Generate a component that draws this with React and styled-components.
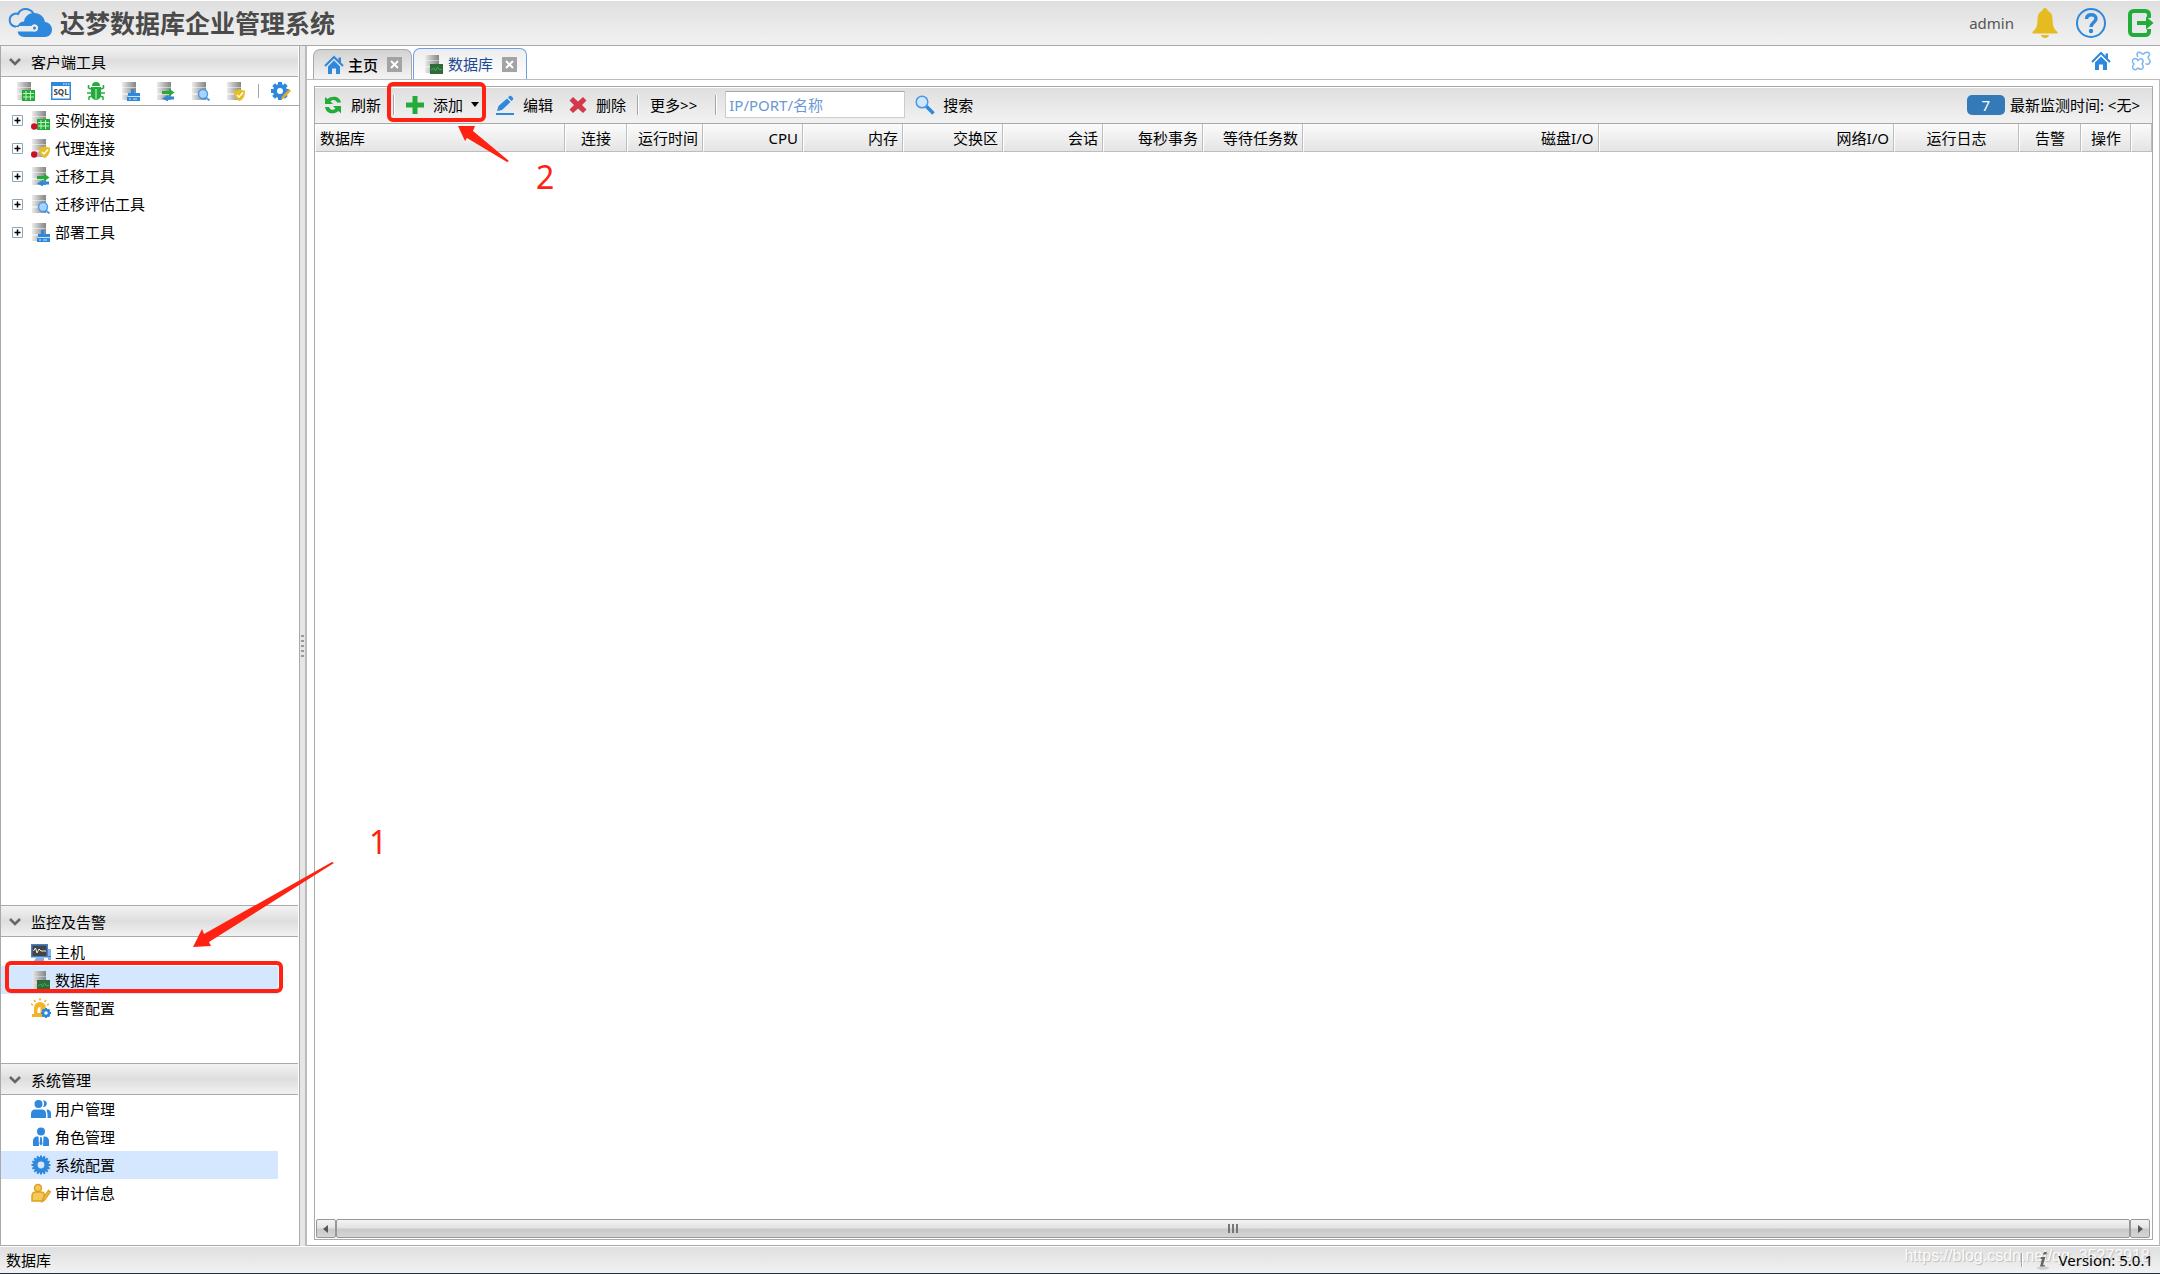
import React from "react";
import styled, { createGlobalStyle, css } from "styled-components";

const Global = createGlobalStyle`
  *, *::before, *::after { box-sizing: border-box; }
  body {
    margin: 0;
    background: #fff;
    color: #000;
    font: 15px/20px "Noto Sans", "Noto Sans CJK SC", sans-serif;
  }
  button, input { font: inherit; color: inherit; }
  button { padding: 0; border: 0; background: none; cursor: pointer; }
  svg { display: block; flex: none; }
`;

const RED = "#ff2212";
const BLUE = "#2e88dc";
const GREEN = "#22ad3a";
const LINE = "#a9a9a9";
const barFill = "linear-gradient(#dfdfdf, #f2f2f2)";

/* ---------- icons ---------- */

const Svg = ({ size = 20, box = 20, children }) => (
  <svg width={size} height={size} viewBox={`0 0 ${box} ${box}`} fill="none" aria-hidden="true">
    {children}
  </svg>
);

const LogoIcon = () => (
  <svg width="46" height="30" viewBox="0 0 46 30" fill="none" aria-hidden="true">
    <path d="M12 18.500H8a6.500 6.500 0 0 1-1-12.500C9 5 10 5.500 11 6 13 2 16 1 18.500 1c3.500 0 6 1.500 8 4.500" stroke={BLUE} strokeWidth="2" />
    <path d="M17 29a7 7 0 0 1-6.500-5.500H27a3.500 3.500 0 1 0-2.500-5.500H11c.5-3 3-4.500 6-4.500C18 8 22 5 27 5c6 0 10 3.500 11 9 4 .5 7 3.500 7 7.500 0 4.500-3 7.500-7.500 7.500z" fill={BLUE} />
    <path d="M9 20h17" stroke="#e9e9e9" strokeWidth="2" />
    <circle cx="27.500" cy="20" r="2.500" fill={BLUE} stroke="#e9e9e9" strokeWidth="2" />
  </svg>
);

const BADGES = {
  table: (
    <g>
      <path d="M6 9h13v11H6z" fill={GREEN} />
      <path d="M7 12.500h11M7 16h11M10 10v9M14.500 10v9" stroke="#c9f2c4" />
    </g>
  ),
  deploy: (
    <g fill={BLUE}>
      <path d="M10 8h3v4h-3z" />
      <path d="M7 12h12v3H7zM6 16h13v4H6z" />
      <path d="M7 15.500h12M8 18h2M12 18h4" stroke="#cfe5fa" />
    </g>
  ),
  transfer: (
    <g>
      <path d="M6 10h7V7.500l5.500 4-5.500 4V13H6z" fill={GREEN} />
      <path d="M18 15.500h-6v-1.500L6 17.500l6 3v-2h6z" fill={BLUE} />
    </g>
  ),
  search: (
    <g>
      <circle cx="12" cy="13" r="4.500" fill="#a9d4ff" stroke="#4d9bea" strokeWidth="1.500" />
      <path d="m15 16.500 3.500 3" stroke="#4d9bea" strokeWidth="2" />
    </g>
  ),
  shield: (
    <g>
      <path d="M13.500 8c2 1.500 3.500 1.500 5.500 1.500 0 5-1 8.500-5.500 10.500-4.500-2-5.500-5.500-5.500-10.500 2 0 3.500 0 5.500-1.500z" fill="#e6bd22" />
      <path d="m11 14 2 2 4-4.500" stroke="#fff" strokeWidth="1.500" />
    </g>
  ),
  chart: (
    <g>
      <path d="M6 10h13v10H6z" fill="#2f6b3a" />
      <path d="m7 16 3-2 1.500 3 2-4 1.500 2.500h3" stroke="#3fae52" />
    </g>
  ),
};

const ServerIcon = ({ badge, alert, size = 20 }) => (
  <Svg size={size}>
    <defs>
      <linearGradient id="slab" x1="0" x2="1">
        <stop offset="0" stopColor="#ececec" />
        <stop offset=".5" stopColor="#b5b5b5" />
        <stop offset="1" stopColor="#858585" />
      </linearGradient>
    </defs>
    <path d="M1 1h14v5.500H1z" fill="url(#slab)" />
    <path d="M1 7h14v5.500H1z" fill="url(#slab)" />
    <path d="M1 13.500h14V19H1z" fill="url(#slab)" />
    {BADGES[badge]}
    {alert && <circle cx="3.200" cy="16.500" r="3.200" fill="#cc1126" />}
  </Svg>
);

const SqlIcon = () => (
  <Svg>
    <path d="M.75 1.750h18.500v16.500H.75z" fill="#fff" stroke={BLUE} strokeWidth="1.500" />
    <path d="M1 1h18v4H1z" fill={BLUE} />
    <path d="M12 3h1.500M14.500 3H16M17 3h1.500" stroke="#fff" />
    <text x="10" y="14" textAnchor="middle" fontSize="8" fontWeight="700" fontFamily="Noto Sans, sans-serif" fill="#444">SQL</text>
  </Svg>
);

const BugIcon = () => (
  <Svg>
    <path d="M6 5a4 4 0 0 1 8 0z" fill={GREEN} />
    <path d="M5 6h10v8a5 5 0 0 1-10 0z" fill={GREEN} />
    <path d="M5.500 8 2.500 7V4M14.500 8l3-1V4M5.500 12H1M14.500 12H19M6 15l-3 1v3M14 15l3 1v3" stroke={GREEN} strokeWidth="1.500" />
    <path d="M10 8v10" stroke="#d9f2dd" />
  </Svg>
);

const teeth = (n, cx, cy, r, w, len) =>
  Array.from({ length: n }, (_, i) => (
    <rect key={i} x={cx - w / 2} y={cy - r - len} width={w} height={len + 2} transform={`rotate(${(360 / n) * i} ${cx} ${cy})`} />
  ));

const GearIcon = () => (
  <Svg>
    <g fill={BLUE}>
      {teeth(16, 10, 10, 7.5, 2, 2)}
    </g>
    <circle cx="10" cy="10" r="5.700" stroke={BLUE} strokeWidth="4.600" />
  </Svg>
);

const GearEditIcon = () => (
  <Svg>
    <g fill={BLUE}>{teeth(8, 9, 10, 6.5, 4, 2.5)}</g>
    <circle cx="9" cy="10" r="5" stroke={BLUE} strokeWidth="4" />
    <path d="m10 19 1-3.500L18 8l2 2-7.500 7.500z" fill="#e2a92c" />
  </Svg>
);

const MonitorIcon = () => (
  <Svg>
    <path d="M.75 2.750h15.500v12H.75z" fill="#444" stroke="#4a7fc4" strokeWidth="1.500" />
    <path d="m2.500 9 2-3 1.500 5 2-4 2 2h5" stroke="#eee" />
    <path d="M17 7h3v11h-3zM5 16h8v3H3z" fill="#7fb2ea" />
    <path d="M17.500 14.500h2" stroke="#2c62a8" />
  </Svg>
);

const AlarmIcon = () => (
  <Svg>
    <path d="M3 16V10a6 6 0 0 1 12 0v6zM1 16h12v3H1z" fill="#f5b32a" />
    <path d="M6.500 15v-4a3 3 0 0 1 3-2v6z" fill="#fff" />
    <path d="M9 0v2.500M3 2l1.500 2M15 2l-1.500 2M0 6l2 1M18 6l-2 1" stroke="#f5b32a" strokeWidth="1.500" />
    <g fill={BLUE}>{teeth(8, 15, 15, 3, 2, 2)}</g>
    <circle cx="15" cy="15" r="3" fill="#fff" stroke={BLUE} strokeWidth="2.500" />
  </Svg>
);

const UsersIcon = () => (
  <Svg>
    <g fill={BLUE}>
      <circle cx="7.500" cy="5" r="4" />
      <path d="M0 19v-4c0-3 1.500-4.500 4-4.500h7c2.500 0 4 1.500 4 4.500v4z" />
      <path d="M12 1.500c5-1 5 7 0 6.500 1.500-2 1.500-4.500 0-6.500zM15.500 10.500c3 0 4.500 1.500 4.500 4V19h-3.500v-4z" />
    </g>
  </Svg>
);

const RoleIcon = () => (
  <Svg>
    <g fill={BLUE}>
      <circle cx="10" cy="4.500" r="4" />
      <path d="M2 19v-5c0-3 2-4.500 4-4.500h1.500L8 19zM18 19v-5c0-3-2-4.500-4-4.500h-1.500L12 19z" />
      <path d="M9.300 10h1.400l.8 7-1.500 1.500L8.500 17z" />
    </g>
  </Svg>
);

const AuditIcon = () => (
  <Svg>
    <g fill="#f3c957" stroke="#dfa024" strokeWidth="1.500">
      <circle cx="7" cy="5" r="3.500" />
      <path d="M1 18v-5c0-2.500 1.500-4 4-4h5c2 0 3 1 3.500 2.500L12 18z" />
      <path d="m11 18.500 1-3 5.500-8 1.800 1.300-5.500 8z" />
    </g>
  </Svg>
);

const HomeIcon = ({ size = 20 }) => (
  <Svg size={size}>
    <path d="M1 11 10 2l9 9" stroke={BLUE} strokeWidth="2" />
    <path d="M14.500 2.500h2.500V8l-2.500-2.500z" fill={BLUE} />
    <path d="M4 11.500 10 5.500l6 6V19h-4v-5.500H8V19H4z" fill={BLUE} />
  </Svg>
);

const PuzzleIcon = () => (
  <Svg>
    <g stroke="#7fb6ee" strokeWidth="1.500">
      <path d="M2.500 8c2-1 3.500 0 4.500 1.500C8 8 10 7 11.500 8.500s.5 3-.5 4.500c1 1 2 3 .5 4.500s-3.500.5-4.500-.5c-1 1-3 2.500-4.500 1s-1-3.500.5-5C1.500 12 .5 9.500 2.500 8z" />
      <path d="M7 6C5 3 6.500.8 9 1.500c1.500.5 2 1.500 3.500 1.500C14 .8 18 .5 18.500 3c.3 2-1.500 2.500-1.500 3.500s2.500 2 2 4.500-3 3-4.500 1.500" />
    </g>
  </Svg>
);

const BellIcon = () => (
  <Svg size={30} box={30}>
    <path d="M15 0c1.500 0 2.500 1 2.500 2.500C21 4 22.500 7 22.500 11c0 7 1.500 10 5 13v1.500h-25V24c3.500-3 5-6 5-13 0-4 1.500-7 5-8.500C12.500 1 13.500 0 15 0zM11 27h8c-.5 4-7.500 4-8 0z" fill="#e5bb20" />
  </Svg>
);

const HelpIcon = () => (
  <Svg size={30} box={30}>
    <circle cx="15" cy="15" r="14" stroke={BLUE} strokeWidth="2" />
    <path d="M10.500 11c0-6 9.500-5.500 9.500-.5 0 4-5 4-5 8.500" stroke={BLUE} strokeWidth="3.500" />
    <circle cx="15" cy="23" r="2.200" fill={BLUE} />
  </Svg>
);

const ExitIcon = () => (
  <Svg size={30} box={30}>
    <path d="M24 10V6.500a3.500 3.500 0 0 0-3.500-3.500h-12A3.500 3.500 0 0 0 5 6.500v17A3.500 3.500 0 0 0 8.500 27h12a3.500 3.500 0 0 0 3.500-3.500V21" stroke={GREEN} strokeWidth="4" />
    <path d="M12 13h9V8.500l7.500 6.500-7.500 6.500V17h-9z" fill={GREEN} />
  </Svg>
);

const RefreshIcon = () => (
  <Svg>
    <path d="M2 9V2l2.500 2C9 0 17 1 18 7.500h-4C12.500 4.500 9.500 4.500 7.500 6.500L10 9z" fill={GREEN} />
    <path d="M18 11v7.500L15.500 16C11 20 3 19 2 12h4c1.500 3.500 4.500 3.500 6.500 1.500L10 11z" fill={GREEN} />
  </Svg>
);

const PlusIcon = () => (
  <Svg><path d="M7.500 1h5v6.500H19v5h-6.500V19h-5v-6.500H1v-5h6.500z" fill={GREEN} /></Svg>
);

const EditIcon = () => (
  <Svg>
    <path d="m2 16 1.500-5L12 3.500l3.500 3.500L7 15z" fill={BLUE} />
    <path d="m13 2.500 1.500-1.500c1-1 4.500 2 3.500 3.500L16.500 6z" fill={BLUE} />
    <path d="M1 19h18" stroke={BLUE} strokeWidth="2" />
  </Svg>
);

const DeleteIcon = () => (
  <Svg><path d="M5 2 10 6.500 15 2l3.500 3.500L14 10l4.500 4.500L15 18l-5-4.500L5 18l-3.500-3.500L6 10 1.500 5.500z" fill="#d23a4b" /></Svg>
);

const SearchIcon = () => (
  <Svg>
    <circle cx="7" cy="7" r="5.800" fill="#cfe6ff" stroke="#4d98e6" strokeWidth="1.500" />
    <path d="m11.500 11.500 7 7" stroke={BLUE} strokeWidth="3.500" />
  </Svg>
);

const InfoIcon = () => (
  <Svg>
    <ellipse cx="10" cy="18" rx="6" ry="1.800" fill="#cfcfcf" />
    <path d="M11 2h3l-1 2.500h-3zM8 7h4.500l-2.500 8h2l-.5 1.500H7L9 9H7.500z" fill="#666" />
  </Svg>
);

const ChevronIcon = () => (
  <Svg size={14} box={14}><path d="m2 4 5 5 5-5" stroke="#666" strokeWidth="2.500" /></Svg>
);

const CloseIcon = () => (
  <Svg size={15} box={15}>
    <path d="M0 0h15v15H0z" fill="#a3a3a3" />
    <path d="m4 4 7 7M11 4l-7 7" stroke="#fff" strokeWidth="2" />
  </Svg>
);

const ExpandIcon = () => (
  <Svg size={11} box={11}>
    <path d="M.5.5h10v10H.5z" fill="#fff" stroke="#8ba6bb" />
    <path d="M2.500 5.500h6M5.500 2.500v6" stroke="#000" strokeWidth="1.500" />
  </Svg>
);

/* ---------- frame ---------- */

const Page = styled.div`
  display: flex;
  flex-direction: column;
  height: 100vh;
  min-height: 600px;
`;

const TopBar = styled.header`
  display: flex;
  align-items: center;
  justify-content: space-between;
  height: 46px;
  padding: 0 5px 0 7px;
  border-top: 1px solid #fff;
  border-bottom: 1px solid ${LINE};
  background: ${barFill};
`;

const Brand = styled.div`
  display: flex;
  align-items: center;
  gap: 7px;
`;

const Title = styled.h1`
  margin: 0;
  font-size: 25px;
  line-height: 32px;
  color: #4a4a4a;
`;

const Account = styled.div`
  display: flex;
  align-items: center;
  gap: 16px;
  color: #555;
`;

const IconButton = styled.button`
  display: flex;
  ${({ $wide }) => $wide && css`padding-left: 3px;`}
`;

const Body = styled.div`
  flex: 1;
  display: flex;
  min-height: 0;
`;

/* ---------- side bar ---------- */

const Side = styled.aside`
  flex: none;
  display: flex;
  flex-direction: column;
  width: 300px;
  border: 1px solid ${LINE};
  border-top: 0;
  background: #fff;
`;

const Section = styled.section`
  display: flex;
  flex-direction: column;
  ${({ $height }) => ($height ? css`flex: none; height: ${$height}px;` : css`flex: 1; min-height: 0;`)}
`;

const SectionHead = styled.button`
  flex: none;
  display: flex;
  align-items: center;
  gap: 9px;
  height: ${({ $first }) => ($first ? 31 : 32)}px;
  margin-right: 1px;
  padding: 1px 0 0 7px;
  border-top: ${({ $first }) => ($first ? 0 : 1)}px solid ${LINE};
  border-bottom: 1px solid ${LINE};
  background: linear-gradient(#f3f3f3, #dedede 50%, #f1f1f1);
`;

const ToolStrip = styled.div`
  flex: none;
  display: flex;
  align-items: center;
  gap: 15px;
  height: 29px;
  padding-left: 15px;
  border-bottom: 1px solid ${LINE};
`;

const Tree = styled.ul`
  margin: ${({ $gap }) => $gap || 0}px 0 0;
  padding: 0;
  list-style: none;
`;

const TreeItem = styled.li`
  position: relative;
`;

const TreeRow = styled.button`
  display: flex;
  align-items: center;
  gap: 4px;
  width: calc(100% - 21px);
  height: 28px;
  padding-left: ${({ $branch }) => ($branch ? 11 : 30)}px;
  background: ${({ $selected }) => ($selected ? "#d5e6ff" : "transparent")};
  svg + svg { margin-left: 4px; }
`;

const Splitter = styled.div`
  flex: none;
  display: flex;
  flex-direction: column;
  align-items: center;
  justify-content: center;
  gap: 3px;
  width: 7px;
  border-right: 2px solid #bbb;
  background: #e6e6e6;
  cursor: col-resize;
`;

const Dot = styled.i`
  width: 3px;
  height: 2px;
  background: #999;
`;

/* ---------- main area ---------- */

const Main = styled.main`
  flex: 1;
  display: flex;
  flex-direction: column;
  min-width: 0;
`;

const TabBar = styled.div`
  flex: none;
  display: flex;
  align-items: flex-end;
  gap: 1px;
  height: 34px;
  padding-left: 6px;
  border-bottom: 1px solid #bbb;
`;

const Tab = styled.div`
  display: flex;
  align-items: center;
  gap: 9px;
  height: ${({ $active }) => ($active ? 31 : 30)}px;
  padding: 0 9px 0 10px;
  border: 1px solid ${({ $active }) => ($active ? "#6c9eea" : LINE)};
  border-bottom: 0;
  border-radius: 7px 7px 0 0;
  background: ${({ $active }) => ($active ? "linear-gradient(#ededed, #fff)" : "linear-gradient(#d2d2d2, #f4f4f4)")};
  color: ${({ $active }) => ($active ? "#1d4a93" : "#000")};
  font-weight: ${({ $active }) => ($active ? 400 : 500)};
`;

const TabLabel = styled.button`
  display: flex;
  align-items: center;
  gap: 4px;
  font-weight: inherit;
`;

const TabTools = styled.div`
  display: flex;
  align-self: center;
  gap: 20px;
  margin-left: auto;
  padding: 0 9px 4px 0;
`;

const Content = styled.div`
  flex: 1;
  display: flex;
  min-height: 0;
  padding: 6px 6px 5px 7px;
  border-right: 1px solid #bbb;
  border-bottom: 1px solid ${LINE};
`;

const Panel = styled.div`
  flex: 1;
  display: flex;
  flex-direction: column;
  min-width: 0;
  border: 1px solid ${LINE};
`;

const Toolbar = styled.div`
  flex: none;
  display: flex;
  align-items: center;
  height: 37px;
  padding: 0 8px 2px;
  border-top: 1px solid #fff;
  border-bottom: 1px solid ${LINE};
  background: ${barFill};
`;

const ToolButton = styled.button`
  position: relative;
  display: flex;
  align-items: center;
  gap: 8px;
  margin-right: ${({ $after }) => $after || 0}px;
`;

const Divider = styled.span`
  flex: none;
  width: 2px;
  height: ${({ $short }) => ($short ? 14 : 20)}px;
  margin: 0 ${({ $after }) => $after || 0}px 0 ${({ $before }) => $before || 0}px;
  border-left: 1px solid #a5a5a5;
  background: #fff;
`;

const Caret = styled.i`
  border: 4px solid transparent;
  border-top: 5px solid #000;
  border-bottom: 0;
`;

const SearchBox = styled.input`
  width: 180px;
  height: 27px;
  margin-right: 10px;
  padding: 0 3px;
  border: 1px solid #ccc;
  border-top-color: ${LINE};
  border-radius: 0;
  background: #fff;
  &::placeholder { color: #6b98d2; opacity: 1; }
`;

const Latest = styled.div`
  display: flex;
  align-items: center;
  gap: 5px;
  margin-left: auto;
  padding-right: 4px;
`;

const Count = styled.span`
  width: 38px;
  border-radius: 5px;
  background: #347ab8;
  color: #fff;
  text-align: center;
`;

const Grid = styled.table`
  flex: none;
  width: 100%;
  table-layout: fixed;
  border-collapse: separate;
  border-spacing: 0;
`;

const HeadCell = styled.th`
  width: ${({ $width }) => ($width ? `${$width}px` : "auto")};
  height: 28px;
  padding: 0 4px;
  border-right: 1px solid #bdbdbd;
  border-bottom: 1px solid #bdbdbd;
  border-left: 1px solid #fff;
  background: linear-gradient(#fbfbfb, #e4e4e4);
  font-weight: 400;
  text-align: ${({ $align }) => $align};
  white-space: nowrap;
`;

const Empty = styled.div`
  flex: 1;
`;

const ScrollTrack = styled.div`
  flex: none;
  display: flex;
  height: 19px;
  margin: 0 2px 1px 1px;
`;

const metal = css`
  display: flex;
  align-items: center;
  justify-content: center;
  border: 1px solid #979797;
  border-radius: 2px;
  background: linear-gradient(#f3f3f3, #e4e4e4 45%, #c9c9c9 55%, #d5d5d5);
`;

const ScrollArrow = styled.button`
  ${metal}
  width: 20px;
`;

const ScrollThumb = styled.div`
  ${metal}
  flex: 1;
  gap: 2px;
`;

const Grip = styled.i`
  width: 2px;
  height: 9px;
  background: #777;
`;

const Footer = styled.footer`
  position: relative;
  flex: none;
  display: flex;
  align-items: center;
  justify-content: space-between;
  height: 28px;
  padding: 0 7px 0 6px;
  border-top: 1px solid #fff;
  border-bottom: 1px solid #1d3040;
  background: ${barFill};
`;

const Version = styled.div`
  position: relative;
  display: flex;
  align-items: center;
`;

const VersionIcon = styled.span`
  padding: 0 6px 0 10px;
`;

const Watermark = styled.span`
  position: absolute;
  top: 0;
  right: 10px;
  color: #fafafa;
  font: 16px/18px "Liberation Sans", Arial, sans-serif;
  text-shadow: 1px 1px 1px #bbb;
`;

/* ---------- red call-outs ---------- */

const Frame = styled.span`
  position: absolute;
  z-index: 2;
  inset: ${({ $inset }) => $inset};
  border: 4px solid ${RED};
  border-radius: 6px;
  pointer-events: none;
`;

const Mark = styled.span`
  position: absolute;
  z-index: 2;
  left: ${({ $left }) => $left}px;
  top: ${({ $top }) => $top}px;
  color: ${RED};
  font-size: 32px;
  line-height: 36px;
  pointer-events: none;
`;

const SelectArrow = styled.svg`
  position: absolute;
  z-index: 2;
  left: 190px;
  top: -106px;
  pointer-events: none;
`;

const AddArrow = styled.svg`
  position: absolute;
  z-index: 2;
  left: 51px;
  top: 28px;
  pointer-events: none;
`;

/* ---------- data ---------- */

const TOOLS = [
  ["实例", <ServerIcon badge="table" />],
  ["SQL", <SqlIcon />],
  ["调试", <BugIcon />],
  ["部署", <ServerIcon badge="deploy" />],
  ["迁移", <ServerIcon badge="transfer" />],
  ["评估", <ServerIcon badge="search" />],
  ["代理", <ServerIcon badge="shield" />],
];

const CLIENT = [
  ["实例连接", <ServerIcon badge="table" alert />],
  ["代理连接", <ServerIcon badge="shield" alert />],
  ["迁移工具", <ServerIcon badge="transfer" />],
  ["迁移评估工具", <ServerIcon badge="search" />],
  ["部署工具", <ServerIcon badge="deploy" />],
];

const SYSTEM = [
  ["用户管理", <UsersIcon />],
  ["角色管理", <RoleIcon />],
  ["系统配置", <GearIcon />, true],
  ["审计信息", <AuditIcon />],
];

const COLUMNS = [
  ["数据库", 250, "left"],
  ["连接", 62, "center"],
  ["运行时间", 76, "right"],
  ["CPU", 100, "right"],
  ["内存", 100, "right"],
  ["交换区", 100, "right"],
  ["会话", 100, "right"],
  ["每秒事务", 100, "right"],
  ["等待任务数", 100, "right"],
  ["磁盘I/O", 0, "right"],
  ["网络I/O", 0, "right"],
  ["运行日志", 125, "center"],
  ["告警", 62, "center"],
  ["操作", 50, "center"],
  ["", 21, "center"],
];

const Row = ({ label, icon, selected, branch, children }) => (
  <TreeItem>
    <TreeRow $selected={selected} $branch={branch}>
      {branch && <ExpandIcon />}
      {icon}
      {label}
    </TreeRow>
    {children}
  </TreeItem>
);

export default function App() {
  return (
    <Page>
      <Global />
      <TopBar>
        <Brand>
          <LogoIcon />
          <Title>达梦数据库企业管理系统</Title>
        </Brand>
        <Account>
          <span>admin</span>
          <IconButton aria-label="告警"><BellIcon /></IconButton>
          <IconButton aria-label="帮助"><HelpIcon /></IconButton>
          <IconButton aria-label="退出" $wide><ExitIcon /></IconButton>
        </Account>
      </TopBar>

      <Body>
        <Side>
          <Section>
            <SectionHead $first><ChevronIcon />客户端工具</SectionHead>
            <ToolStrip>
              {TOOLS.map(([name, icon]) => (
                <IconButton key={name} aria-label={name}>{icon}</IconButton>
              ))}
              <Divider $short $before={-3} $after={-4} />
              <IconButton aria-label="设置"><GearEditIcon /></IconButton>
            </ToolStrip>
            <Tree>
              {CLIENT.map(([label, icon]) => (
                <Row key={label} label={label} icon={icon} branch />
              ))}
            </Tree>
          </Section>

          <Section $height={158}>
            <SectionHead><ChevronIcon />监控及告警</SectionHead>
            <Tree $gap={1}>
              <Row label="主机" icon={<MonitorIcon />} />
              <Row label="数据库" icon={<ServerIcon badge="chart" />} selected>
                <Frame $inset="-5px 16px 1px 4px" />
                <SelectArrow width="146" height="90" viewBox="0 0 146 90" aria-hidden="true">
                  <path d="M2 87 11 69 13 74 141 2 143 3 18 82 20 86z" fill={RED} />
                </SelectArrow>
                <Mark $left={368} $top={-142}>1</Mark>
              </Row>
              <Row label="告警配置" icon={<AlarmIcon />} />
            </Tree>
          </Section>

          <Section $height={182}>
            <SectionHead><ChevronIcon />系统管理</SectionHead>
            <Tree>
              {SYSTEM.map(([label, icon, selected]) => (
                <Row key={label} label={label} icon={icon} selected={selected} />
              ))}
            </Tree>
          </Section>
        </Side>

        <Splitter>
          <Dot /><Dot /><Dot /><Dot /><Dot />
        </Splitter>

        <Main>
          <TabBar>
            <Tab>
              <TabLabel><HomeIcon />主页</TabLabel>
              <IconButton aria-label="关闭主页"><CloseIcon /></IconButton>
            </Tab>
            <Tab $active>
              <TabLabel><ServerIcon badge="chart" />数据库</TabLabel>
              <IconButton aria-label="关闭数据库"><CloseIcon /></IconButton>
            </Tab>
            <TabTools>
              <IconButton aria-label="主页"><HomeIcon /></IconButton>
              <IconButton aria-label="插件"><PuzzleIcon /></IconButton>
            </TabTools>
          </TabBar>

          <Content>
            <Panel>
              <Toolbar>
                <ToolButton $after={12}><RefreshIcon />刷新</ToolButton>
                <Divider $after={10} />
                <ToolButton $after={16}>
                  <PlusIcon />添加<Caret />
                  <Frame $inset="-13px -7px -7px -18px" />
                  <AddArrow width="56" height="42" viewBox="0 0 56 42" aria-hidden="true">
                    <path d="M2 3 19 3 17 8 53 38 51 39 11 15 9 18z" fill={RED} />
                  </AddArrow>
                  <Mark $left={131} $top={64}>2</Mark>
                </ToolButton>
                <ToolButton $after={15}><EditIcon />编辑</ToolButton>
                <ToolButton $after={11}><DeleteIcon />删除</ToolButton>
                <Divider $after={11} />
                <ToolButton $after={18}>更多&gt;&gt;</ToolButton>
                <Divider $after={8} />
                <SearchBox type="text" aria-label="IP/PORT/名称" placeholder="IP/PORT/名称" />
                <ToolButton><SearchIcon />搜索</ToolButton>
                <Latest>
                  <Count>7</Count>
                  <span>最新监测时间: &lt;无&gt;</span>
                </Latest>
              </Toolbar>
              <Grid>
                <thead>
                  <tr>
                    {COLUMNS.map(([name, width, align], i) => (
                      <HeadCell key={i} $width={width} $align={align}>{name}</HeadCell>
                    ))}
                  </tr>
                </thead>
              </Grid>
              <Empty />
              <ScrollTrack>
                <ScrollArrow aria-label="向左滚动">
                  <Svg size={8} box={8}><path d="M6 0v8L1 4z" fill="#555" /></Svg>
                </ScrollArrow>
                <ScrollThumb><Grip /><Grip /><Grip /></ScrollThumb>
                <ScrollArrow aria-label="向右滚动">
                  <Svg size={8} box={8}><path d="M2 0v8l5-4z" fill="#555" /></Svg>
                </ScrollArrow>
              </ScrollTrack>
            </Panel>
          </Content>
        </Main>
      </Body>

      <Footer>
        <span>数据库</span>
        <Watermark>https://blog.csdn.net/qq_35273918</Watermark>
        <Version>
          <Divider $short />
          <VersionIcon><InfoIcon /></VersionIcon>
          Version: 5.0.1
        </Version>
      </Footer>
    </Page>
  );
}
